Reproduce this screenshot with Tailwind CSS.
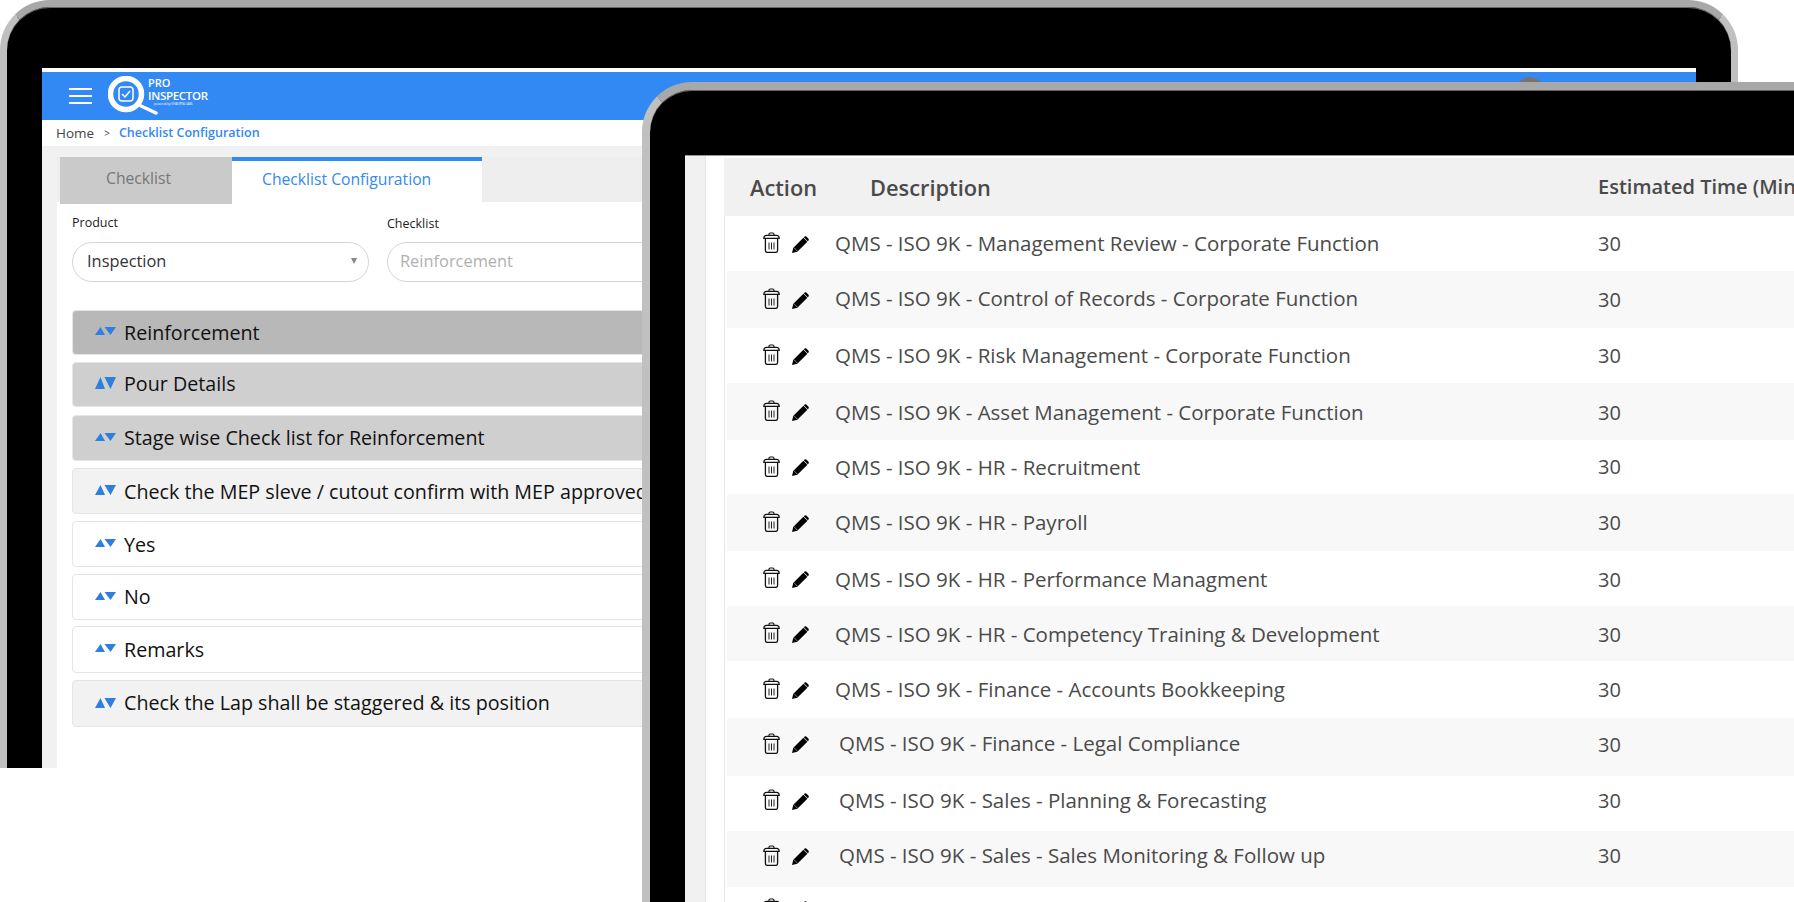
<!DOCTYPE html>
<html lang="en">
<head>
  <meta charset="UTF-8">
  <meta name="viewport" content="width=device-width, initial-scale=1.0">
  <title>Pro Inspector</title>
  <script src="https://cdn.jsdelivr.net/npm/@tailwindcss/browser@4"></script>
</head>
<body class="relative w-[1794px] h-[902px] overflow-hidden bg-white font-['Open_Sans',sans-serif]">
  <svg class="hidden">
    <symbol id="trash" viewBox="0 0 17 21">
      <path d="M6 3.300V2.200C6 1.500 6.500 1 7.200 1h2.600c.7 0 1.200.5 1.200 1.200v1.100" fill="none" stroke="#111" stroke-width="1.100"/>
      <path d="M.8 6.300c0-1.800 1-3 2.700-3h10c1.700 0 2.700 1.200 2.700 3z" fill="none" stroke="#111" stroke-width="1.200"/>
      <path d="M2.400 6.500v11.700c0 1.300.9 2.200 2.100 2.200h8c1.200 0 2.100-.9 2.100-2.200V6.500" fill="none" stroke="#111" stroke-width="1.300"/>
      <path d="M6 10.500v7M8.500 10.500v7M11 10.500v7" fill="none" stroke="#222" stroke-width="1"/>
    </symbol>
    <symbol id="pencil" viewBox="0 0 17 17">
      <path d="M0 17l1.300-5.200L11.400 1.700l4 4L5.300 15.800zM12.300.8c.7-.7 1.600-.7 2.300 0l1.700 1.700c.7.7.7 1.600 0 2.300l-.5.500-4-4z" fill="#000"/>
      <path d="M1.700 11.400l3.900 3.900" stroke="#fff" stroke-width=".5"/>
    </symbol>
    <symbol id="sort" viewBox="0 0 21 10" preserveAspectRatio="none">
      <path d="M0 10L5.500 0 10 10zM9.500 0H21l-5.500 10z" fill="#2f7fdc"/>
    </symbol>
  </svg>

  <!-- back tablet -->
  <div class="absolute left-0 top-0 w-[1738px] h-[768px] bg-black border-[7px] border-b-0 border-t-[#a8a8a8] border-x-[#c0c0c0] rounded-t-[50px] pt-[61px] px-[35px] shadow-[inset_0_1px_0_#666]">
    <div class="h-full bg-white pt-1 flex flex-col">
      <header class="h-12 shrink-0 bg-[#3389f3] flex items-center pl-[27px] relative">
        <div class="w-[23px] flex flex-col gap-[5px]">
          <span class="h-[2px] bg-white"></span>
          <span class="h-[2px] bg-white"></span>
          <span class="h-[2px] bg-white"></span>
        </div>
        <svg class="ml-[16px] w-[50px] h-[40px]" viewBox="0 0 50 40" fill="none">
          <circle cx="18" cy="18" r="15.500" stroke="#fff" stroke-width="5.500"/>
          <path d="M33 30l15 7" stroke="#fff" stroke-width="3.500" stroke-linecap="round"/>
          <rect x="11" y="11" width="14" height="14" rx="3" stroke="#fff" stroke-width="1.500"/>
          <path d="M14 18l3 3 5-6" stroke="#fff" stroke-width="1.500"/>
        </svg>
        <div class="-ml-[10px] mb-[9px] flex flex-col text-white leading-none font-semibold">
          <span class="text-[11px]">PRO</span>
          <span class="text-[11.500px] mt-[2px] tracking-[-0.3px]">INSPECTOR</span>
          <span class="text-[3px] font-normal mt-[1px] pl-[6px]">powered by SHAURYA LABS</span>
        </div>
        <span class="absolute left-[1475px] top-[5px] w-[26px] h-[26px] rounded-full bg-[#77736e]"></span>
      </header>
      <nav class="h-[26px] shrink-0 flex items-center pl-[14px] text-[13.500px] text-[#444]">
        <span>Home</span>
        <span class="ml-[10px] text-[10px]">&gt;</span>
        <span class="ml-[9px] text-[12.500px] font-semibold text-[#3389f3]">Checklist Configuration</span>
      </nav>
      <main class="flex-1 bg-[#f1f1f1] pl-[15px] pt-[11px]">
        <div class="h-full bg-white">
          <div class="h-[45px] bg-[#eeeeee] flex pl-[3px]">
            <div class="w-[172px] h-[47px] bg-[#cacaca] text-[#777] text-[15.700px] flex items-center pl-[46px] pb-[3px]">Checklist</div>
            <div class="w-[250px] h-[47px] bg-white border-t-4 border-[#3389f3] text-[#3389f3] text-[15.700px] flex items-center pl-[30px] pb-[5px]">Checklist Configuration</div>
          </div>
          <div class="flex gap-[18px] pl-[15px] pt-[12px]">
            <div class="w-[297px]">
              <label class="block text-[12.500px] text-[#222] leading-[18px]">Product</label>
              <div class="mt-[10px] h-10 rounded-[20px] border border-[#d5d5d5] flex items-center justify-between pl-[14px] pr-[11px] pb-[2px] text-[16.400px] text-[#333]">
                <span>Inspection</span>
                <span class="w-0 h-0 border-x-[3.500px] border-x-transparent border-t-[6px] border-t-[#888]"></span>
              </div>
            </div>
            <div class="w-[297px]">
              <label class="block text-[12.500px] text-[#222] leading-[18px] pt-px">Checklist</label>
              <div class="mt-[9px] h-10 rounded-[20px] border border-[#d5d5d5] flex items-center pl-[12px] pb-[2px] text-[16.400px] text-[#b0b0b0]">Reinforcement</div>
            </div>
          </div>
          <div class="mt-[28px] ml-[15px] w-[1500px] flex flex-col text-[19.700px] text-[#111]">
            <div class="h-[45px] rounded bg-[#b8b8b8] border border-[#e5e5e5] flex items-center pl-[22px]"><svg class="w-[21px] h-[8px] mr-[8px] -mt-[3px]"><use href="#sort"/></svg>Reinforcement</div>
            <div class="mt-[7px] h-[45px] rounded bg-[#cfcfcf] border border-[#e5e5e5] flex items-center pl-[22px] pb-[2px]"><svg class="w-[21px] h-[12px] mr-[8px] -mt-[1px]"><use href="#sort"/></svg>Pour Details</div>
            <div class="mt-[8px] h-[46px] rounded bg-[#cfcfcf] border border-[#e5e5e5] flex items-center pl-[22px]"><svg class="w-[21px] h-[8px] mr-[8px] -mt-[3px]"><use href="#sort"/></svg>Stage wise Check list for Reinforcement</div>
            <div class="mt-[7px] h-[46px] rounded bg-[#f2f2f2] border border-[#e5e5e5] flex items-center pl-[22px] pt-[2px]"><svg class="w-[21px] h-[10px] mr-[8px] -mt-[5px]"><use href="#sort"/></svg>Check the MEP sleve / cutout confirm with MEP approved drawing</div>
            <div class="mt-[7px] h-[46px] rounded bg-white border border-[#e5e5e5] flex items-center pl-[22px] pt-px"><svg class="w-[21px] h-[8px] mr-[8px] -mt-[4px]"><use href="#sort"/></svg>Yes</div>
            <div class="mt-[7px] h-[46px] rounded bg-white border border-[#e5e5e5] flex items-center pl-[22px]"><svg class="w-[21px] h-[8px] mr-[8px] -mt-[3px]"><use href="#sort"/></svg>No</div>
            <div class="mt-[6px] h-[47px] rounded bg-white border border-[#e5e5e5] flex items-center pl-[22px]"><svg class="w-[21px] h-[8px] mr-[8px] -mt-[3px]"><use href="#sort"/></svg>Remarks</div>
            <div class="mt-[7px] h-[47px] rounded bg-[#f2f2f2] border border-[#e5e5e5] flex items-center pl-[22px] pb-px"><svg class="w-[21px] h-[10px] mr-[8px] -mt-[1px]"><use href="#sort"/></svg>Check the Lap shall be staggered &amp; its position</div>
          </div>
        </div>
      </main>
    </div>
  </div>

  <!-- front tablet -->
  <div class="absolute left-[642px] top-[82px] w-[1300px] h-[900px] bg-black border-[8px] border-t-[#a8a8a8] border-x-[#c0c0c0] border-b-[#c0c0c0] rounded-t-[50px] pt-[65px] pl-[35px] shadow-[inset_0_1px_0_#666]">
    <div class="h-full bg-white border-t border-[#999] flex">
      <div class="w-[21px] bg-[#f1f1f1] border-r border-[#e5e5e5]"></div>
      <div class="ml-[18px] flex-1 pt-[2px] text-[20.500px] text-[#4a4a4a]">
        <div class="h-[58px] bg-[#f1f1f1] flex items-center font-semibold">
          <span class="ml-[26px] w-[120px] text-[21.800px] pt-[2px]">Action</span>
          <span class="w-[728px] text-[21.800px] pt-[2px]">Description</span>
          <span class="text-[20px]">Estimated Time (Min)</span>
        </div>
        <div class="border-l border-[#e8e8e8] pl-[2px]">
          <div class="h-[55px] flex items-center"><div class="w-[108px] pl-[36px] -mt-[2px] flex items-center"><svg class="w-[17px] h-[21px]"><use href="#trash"/></svg><svg class="ml-[12px] mt-[3px] w-[17px] h-[17px]"><use href="#pencil"/></svg></div><span class="w-[763px]">QMS - ISO 9K - Management Review - Corporate Function</span><span class="text-[20px]">30</span></div>
          <div class="h-[57px] flex items-center bg-[#f8f8f8]"><div class="w-[108px] pl-[36px] -mt-[2px] flex items-center"><svg class="w-[17px] h-[21px]"><use href="#trash"/></svg><svg class="ml-[12px] mt-[3px] w-[17px] h-[17px]"><use href="#pencil"/></svg></div><span class="w-[763px] -mt-[2px]">QMS - ISO 9K - Control of Records - Corporate Function</span><span class="text-[20px]">30</span></div>
          <div class="h-[55px] flex items-center"><div class="w-[108px] pl-[36px] -mt-[2px] flex items-center"><svg class="w-[17px] h-[21px]"><use href="#trash"/></svg><svg class="ml-[12px] mt-[3px] w-[17px] h-[17px]"><use href="#pencil"/></svg></div><span class="w-[763px]">QMS - ISO 9K - Risk Management - Corporate Function</span><span class="text-[20px]">30</span></div>
          <div class="h-[57px] flex items-center bg-[#f8f8f8]"><div class="w-[108px] pl-[36px] -mt-[2px] flex items-center"><svg class="w-[17px] h-[21px]"><use href="#trash"/></svg><svg class="ml-[12px] mt-[3px] w-[17px] h-[17px]"><use href="#pencil"/></svg></div><span class="w-[763px] mt-[2px]">QMS - ISO 9K - Asset Management - Corporate Function</span><span class="text-[20px] mt-[2px]">30</span></div>
          <div class="h-[54px] flex items-center"><div class="w-[108px] pl-[36px] -mt-[2px] flex items-center"><svg class="w-[17px] h-[21px]"><use href="#trash"/></svg><svg class="ml-[12px] mt-[3px] w-[17px] h-[17px]"><use href="#pencil"/></svg></div><span class="w-[763px]">QMS - ISO 9K - HR - Recruitment</span><span class="text-[20px]">30</span></div>
          <div class="h-[57px] flex items-center bg-[#f8f8f8]"><div class="w-[108px] pl-[36px] -mt-[2px] flex items-center"><svg class="w-[17px] h-[21px]"><use href="#trash"/></svg><svg class="ml-[12px] mt-[3px] w-[17px] h-[17px]"><use href="#pencil"/></svg></div><span class="w-[763px]">QMS - ISO 9K - HR - Payroll</span><span class="text-[20px]">30</span></div>
          <div class="h-[55px] flex items-center"><div class="w-[108px] pl-[36px] -mt-[2px] flex items-center"><svg class="w-[17px] h-[21px]"><use href="#trash"/></svg><svg class="ml-[12px] mt-[3px] w-[17px] h-[17px]"><use href="#pencil"/></svg></div><span class="w-[763px] mt-[2px]">QMS - ISO 9K - HR - Performance Managment</span><span class="text-[20px] mt-[2px]">30</span></div>
          <div class="h-[55px] flex items-center bg-[#f8f8f8]"><div class="w-[108px] pl-[36px] -mt-[2px] flex items-center"><svg class="w-[17px] h-[21px]"><use href="#trash"/></svg><svg class="ml-[12px] mt-[3px] w-[17px] h-[17px]"><use href="#pencil"/></svg></div><span class="w-[763px] mt-[2px]">QMS - ISO 9K - HR - Competency Training &amp; Development</span><span class="text-[20px] mt-[2px]">30</span></div>
          <div class="h-[57px] flex items-center"><div class="w-[108px] pl-[36px] -mt-[2px] flex items-center"><svg class="w-[17px] h-[21px]"><use href="#trash"/></svg><svg class="ml-[12px] mt-[3px] w-[17px] h-[17px]"><use href="#pencil"/></svg></div><span class="w-[763px]">QMS - ISO 9K - Finance - Accounts Bookkeeping</span><span class="text-[20px]">30</span></div>
          <div class="h-[58px] flex items-center bg-[#f8f8f8] pb-[6px]"><div class="w-[108px] pl-[36px] -mt-[2px] flex items-center"><svg class="w-[17px] h-[21px]"><use href="#trash"/></svg><svg class="ml-[12px] mt-[3px] w-[17px] h-[17px]"><use href="#pencil"/></svg></div><span class="w-[763px] pl-1 -mt-[2px]">QMS - ISO 9K - Finance - Legal Compliance</span><span class="text-[20px] mt-[2px]">30</span></div>
          <div class="h-[55px] flex items-center pb-[6px]"><div class="w-[108px] pl-[36px] -mt-[2px] flex items-center"><svg class="w-[17px] h-[21px]"><use href="#trash"/></svg><svg class="ml-[12px] mt-[3px] w-[17px] h-[17px]"><use href="#pencil"/></svg></div><span class="w-[763px] pl-1 -mt-[1px]">QMS - ISO 9K - Sales - Planning &amp; Forecasting</span><span class="text-[20px]">30</span></div>
          <div class="h-[56px] flex items-center bg-[#f8f8f8] pb-[6px]"><div class="w-[108px] pl-[36px] -mt-[2px] flex items-center"><svg class="w-[17px] h-[21px]"><use href="#trash"/></svg><svg class="ml-[12px] mt-[3px] w-[17px] h-[17px]"><use href="#pencil"/></svg></div><span class="w-[763px] pl-1 -mt-[1px]">QMS - ISO 9K - Sales - Sales Monitoring &amp; Follow up</span><span class="text-[20px]">30</span></div>
          <div class="h-[42px] flex items-center"><div class="w-[108px] pl-[36px] flex items-center"><svg class="w-[17px] h-[21px]"><use href="#trash"/></svg><svg class="ml-[12px] mt-[3px] w-[17px] h-[17px]"><use href="#pencil"/></svg></div></div>
        </div>
      </div>
    </div>
  </div>
</body>
</html>
